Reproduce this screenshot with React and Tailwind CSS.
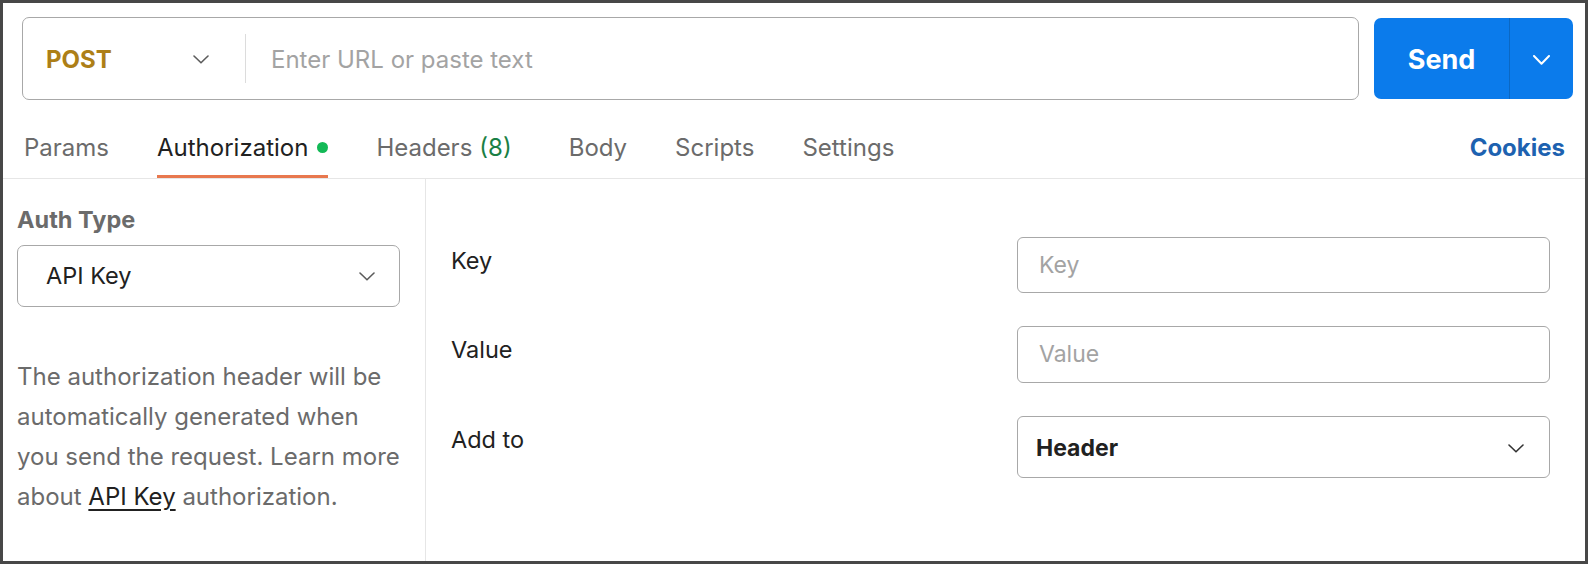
import React from "react";

function Chevron({ className = "", color = "#5c5c5c", w = 16, h = 9, sw = 1.6 }) {
  return (
    <svg width={w} height={h} viewBox={`0 0 ${w} ${h}`} className={className} fill="none">
      <path d={`M1 1 L${w / 2} ${h - 1.2} L${w - 1} 1`} stroke={color} strokeWidth={sw} strokeLinecap="round" strokeLinejoin="round" />
    </svg>
  );
}

export default function App() {
  const font = { fontFamily: "Inter, 'Noto Sans', 'Liberation Sans', sans-serif" };
  return (
    <div style={font} className="w-[1588px] h-[564px] border-[3px] border-[#474747] bg-white flex flex-col overflow-hidden">
      {/* URL bar */}
      <div className="flex items-center pl-[19px] pr-[12px] pt-[14px] gap-[15px]">
        <div className="flex-1 h-[83px] border-[1.5px] border-[#a8a8a8] rounded-[7px] flex items-center">
          <div className="w-[222px] flex items-center pl-[23px] pr-[36px] justify-between pt-[2px]">
            <span className="text-[24px] font-bold text-[#ad7f17] leading-none">POST</span>
            <Chevron />
          </div>
          <div className="w-px h-[49px] bg-[#dcdcdc]" />
          <div className="pl-[25px] pt-[2px] text-[24px] text-[#a3a3a3] leading-none">Enter URL or paste text</div>
        </div>
        <div className="w-[199px] h-[81px] rounded-[7px] bg-[#0b7beb] flex">
          <div className="w-[135px] flex items-center justify-center pt-[3px] text-white font-bold text-[27px]">Send</div>
          <div className="w-px bg-[#0a68c4]" />
          <div className="flex-1 flex items-center justify-center pt-[2px]">
            <Chevron color="#ffffff" w={17} h={10} sw={2} />
          </div>
        </div>
      </div>

      {/* Tabs */}
      <div className="h-[79px] border-b border-[#e6e6e6] flex items-stretch pl-[21px] pr-[20px]">
        <div className="flex gap-[48px] flex-1">
          {[
            { label: "Params" },
            { label: "Authorization", active: true, dot: true },
            { label: "Headers", count: "(8)" },
            { label: "Body" },
            { label: "Scripts" },
            { label: "Settings" },
          ].map((t) => (
            <div key={t.label} className={`flex flex-col h-full ${t.count ? "pr-[9px]" : ""}`}>
              <div className="pt-[33px] flex items-center gap-[9px] text-[24px] leading-[29px]">
                <span className={t.active ? "text-[#212121]" : "text-[#6b6b6b]"}>{t.label}</span>
                {t.count && <span className="text-[#1a7f45] -ml-[2px]">{t.count}</span>}
                {t.dot && <span className="w-[11px] h-[11px] rounded-full bg-[#13b956]" />}
              </div>
              <div className={`mt-auto h-[3px] ${t.active ? "bg-[#e8784e]" : ""}`} />
            </div>
          ))}
        </div>
        <div className="pt-[33px] text-[24px] leading-[29px] font-bold text-[#1d62b0]">Cookies</div>
      </div>

      {/* Panels */}
      <div className="flex flex-1">
        <div className="w-[423px] border-r border-[#e6e6e6] pl-[14px] pt-[27px]">
          <div className="text-[23.5px] leading-[28px] font-bold text-[#6b6b6b]">Auth Type</div>
          <div className="mt-[11px] w-[383px] h-[62px] border-[1.5px] border-[#a8a8a8] rounded-[7px] flex items-center justify-between pl-[28px] pr-[24px]">
            <span className="text-[23.5px] text-[#212121]">API Key</span>
            <Chevron />
          </div>
          <p className="mt-[50px] text-[24px] leading-[40px] text-[#6b6b6b] whitespace-nowrap">
            The authorization header will be
            <br />
            automatically generated when
            <br />
            you send the request. Learn more
            <br />
            about <span className="text-[#212121] underline underline-offset-[4px]">API Key</span> authorization.
          </p>
        </div>
        <div className="flex-1 pl-[25px] pt-[58px]">
          <div className="grid grid-cols-[566px_533px] gap-y-[33px]">
            <div className="mt-[10px] text-[23.5px] leading-[28px] text-[#212121]">Key</div>
            <div className="h-[56px] border-[1.5px] border-[#a8a8a8] rounded-[6px] flex items-center pl-[21px] text-[23px] text-[#a3a3a3]">Key</div>
            <div className="mt-[10px] text-[23.5px] leading-[28px] text-[#212121]">Value</div>
            <div className="h-[57px] border-[1.5px] border-[#a8a8a8] rounded-[6px] flex items-center pl-[21px] text-[23px] text-[#a3a3a3]">Value</div>
            <div className="mt-[10px] text-[23.5px] leading-[28px] text-[#212121]">Add to</div>
            <div className="h-[62px] border-[1.5px] border-[#a8a8a8] rounded-[6px] flex items-center justify-between pl-[18px] pr-[25px] pt-[2px]">
              <span className="text-[23px] font-bold text-[#212121]">Header</span>
              <Chevron color="#333333" />
            </div>
          </div>
        </div>
      </div>
    </div>
  );
}
